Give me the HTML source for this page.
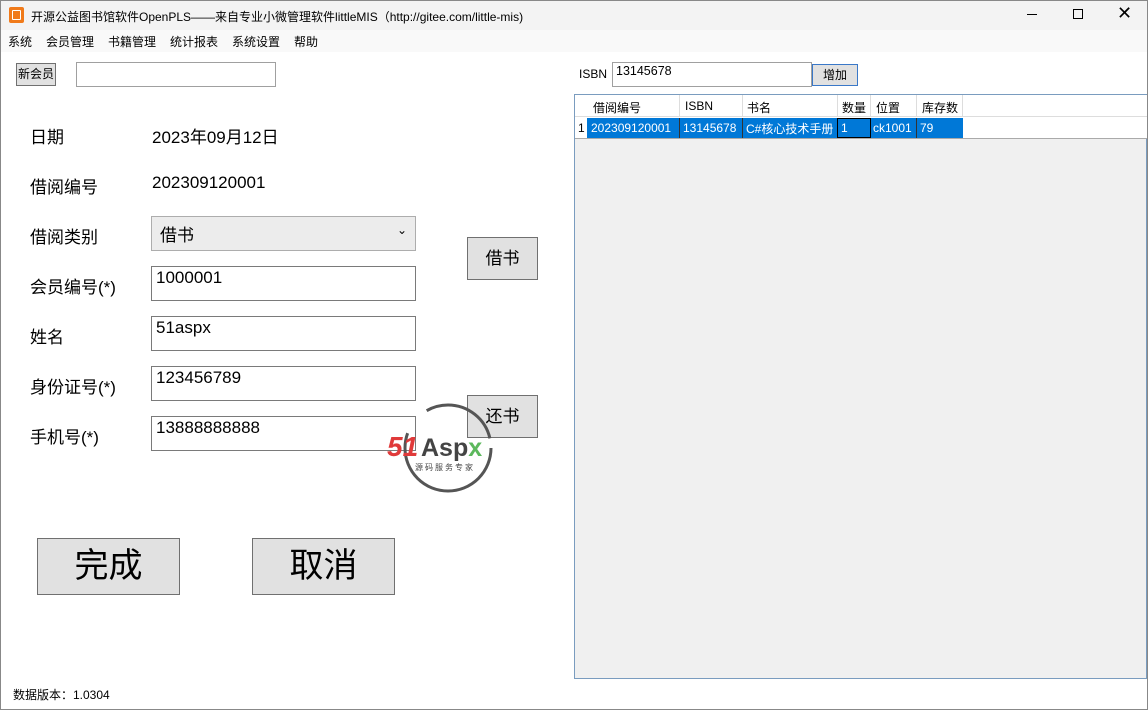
<!DOCTYPE html>
<html><head><meta charset="utf-8"><style>
*{box-sizing:border-box;margin:0;padding:0}
body{width:1148px;height:710px;position:relative;overflow:hidden;background:#fff;font-family:"Liberation Sans","Noto Sans CJK SC",sans-serif;color:#000}
.a{position:absolute;white-space:nowrap}
.tb{left:0;top:0;width:1148px;height:30px;background:#f3f3f3}
.mb{left:0;top:30px;width:1148px;height:22px;background:#f9f9f9;font-size:12px}
.lbl{font-size:17px;left:30px}
.val{font-size:17px;left:152px}
.inp{left:151px;width:265px;height:35px;border:1px solid #7a7a7a;background:#fff;font-size:17px;padding:1px 4px}
.btn{background:#e1e1e1;border:1px solid #adadad;text-align:center}
</style></head><body>
<div class="a" style="left:0;top:0;width:1148px;height:710px;border:1px solid #888;z-index:9;pointer-events:none"></div>
<div class="a tb"></div>
<div class="a" style="left:9px;top:7px;width:15px;height:16px;background:#f07a1a;border-radius:2px"><div style="margin:3px 3px;width:9px;height:10px;border:1.5px solid #fff;border-radius:1px"></div></div>
<div class="a" style="left:31px;top:8px;font-size:12px">开源公益图书馆软件OpenPLS——来自专业小微管理软件littleMIS（http://gitee.com/little-mis)</div>
<div class="a" style="left:1027px;top:14px;width:10px;height:1px;background:#000"></div>
<div class="a" style="left:1073px;top:9px;width:10px;height:10px;border:1px solid #000"></div>
<div class="a" style="left:1117px;top:3px;font-size:18px;font-weight:300">✕</div>
<div class="a mb"><span class="a" style="left:8px;top:3px">系统</span><span class="a" style="left:46px;top:3px">会员管理</span><span class="a" style="left:108px;top:3px">书籍管理</span><span class="a" style="left:170px;top:3px">统计报表</span><span class="a" style="left:232px;top:3px">系统设置</span><span class="a" style="left:294px;top:3px">帮助</span></div>

<div class="a btn" style="left:16px;top:63px;width:40px;height:23px;font-size:12px;line-height:21px;border-color:#707070">新会员</div>
<div class="a" style="left:76px;top:62px;width:200px;height:25px;border:1px solid #a0a0a0"></div>

<div class="a lbl" style="top:123px">日期</div><div class="a val" style="top:123px">2023年09月12日</div>
<div class="a lbl" style="top:173px">借阅编号</div><div class="a val" style="top:173px">202309120001</div>
<div class="a lbl" style="top:223px">借阅类别</div>
<div class="a inp" style="top:216px;background:#ececec;border-color:#adadad;padding:4px 8px">借书<span style="position:absolute;right:8px;top:6px;font-size:12px">⌄</span></div>
<div class="a lbl" style="top:273px">会员编号(*)</div><div class="a inp" style="top:266px">1000001</div>
<div class="a lbl" style="top:323px">姓名</div><div class="a inp" style="top:316px">51aspx</div>
<div class="a lbl" style="top:373px">身份证号(*)</div><div class="a inp" style="top:366px">123456789</div>
<div class="a lbl" style="top:423px">手机号(*)</div><div class="a inp" style="top:416px">13888888888</div>

<div class="a btn" style="left:467px;top:237px;width:71px;height:43px;font-size:17px;line-height:41px;border-color:#707070">借书</div>
<div class="a btn" style="left:467px;top:395px;width:71px;height:43px;font-size:17px;line-height:41px;border-color:#707070">还书</div>

<svg class="a" style="left:385px;top:402px" width="130" height="92"><circle cx="63" cy="46" r="43" fill="none" stroke="#555" stroke-width="3" stroke-dasharray="150 30 80 30"/>
<text x="2" y="54" font-family="Liberation Sans" font-style="italic" font-weight="bold" font-size="28" fill="#e03a3a">51</text>
<text x="36" y="54" font-family="Liberation Sans" font-weight="bold" font-size="25" fill="#444">Asp<tspan fill="#5cb85c">x</tspan></text>
<text x="30" y="68" font-family="Noto Sans CJK SC" font-size="8" fill="#444" letter-spacing="2">源码服务专家</text></svg>

<div class="a btn" style="left:37px;top:538px;width:143px;height:57px;font-size:34px;line-height:55px;border-color:#707070">完成</div>
<div class="a btn" style="left:252px;top:538px;width:143px;height:57px;font-size:34px;line-height:55px;border-color:#707070">取消</div>

<div class="a" style="left:13px;top:686px;font-size:12px">数据版本：1.0304</div>

<div class="a" style="left:579px;top:67px;font-size:12px">ISBN</div>
<div class="a" style="left:612px;top:62px;width:200px;height:25px;border:1px solid #a0a0a0;font-size:12.5px;padding:1px 3px">13145678</div>
<div class="a btn" style="left:812px;top:64px;width:46px;height:22px;font-size:12px;line-height:20px;border-color:#3a78c8">增加</div>

<div class="a" style="left:574px;top:94px;width:573px;height:585px;border:1px solid #7a9cbf;background:#f0f0f0"></div>
<div class="a" style="left:575px;top:95px;width:572px;height:22px;background:#fff;border-bottom:1px solid #ddd;font-size:12px">
<span class="a" style="left:18px;top:4px">借阅编号</span><span class="a" style="left:110px;top:4px">ISBN</span><span class="a" style="left:172px;top:4px">书名</span><span class="a" style="left:267px;top:4px">数量</span><span class="a" style="left:301px;top:4px">位置</span><span class="a" style="left:347px;top:4px">库存数</span>
<span class="a" style="left:104px;top:0;width:1px;height:22px;background:#ddd"></span><span class="a" style="left:167px;top:0;width:1px;height:22px;background:#ddd"></span><span class="a" style="left:262px;top:0;width:1px;height:22px;background:#ddd"></span><span class="a" style="left:295px;top:0;width:1px;height:22px;background:#ddd"></span><span class="a" style="left:341px;top:0;width:1px;height:22px;background:#ddd"></span><span class="a" style="left:387px;top:0;width:1px;height:22px;background:#ddd"></span></div>
<div class="a" style="left:575px;top:117px;width:572px;height:22px;background:#fff;border-bottom:1px solid #aaa;font-size:12px">
<span class="a" style="left:3px;top:4px">1</span>
<div class="a" style="left:12px;top:1px;width:376px;height:20px;background:#0078d7;color:#fff"></div>
<span class="a" style="left:16px;top:4px;color:#fff">202309120001</span><span class="a" style="left:108px;top:4px;color:#fff">13145678</span><span class="a" style="left:171px;top:3px;color:#fff">C#核心技术手册</span>
<div class="a" style="left:262px;top:1px;width:34px;height:20px;border:1px solid #000;color:#fff;padding:2px 3px">1</div>
<span class="a" style="left:298px;top:4px;color:#fff">ck1001</span><span class="a" style="left:345px;top:4px;color:#fff">79</span>
<span class="a" style="left:104px;top:1px;width:1px;height:20px;background:#333"></span><span class="a" style="left:167px;top:1px;width:1px;height:20px;background:#333"></span><span class="a" style="left:341px;top:1px;width:1px;height:20px;background:#333"></span></div>
</body></html>
